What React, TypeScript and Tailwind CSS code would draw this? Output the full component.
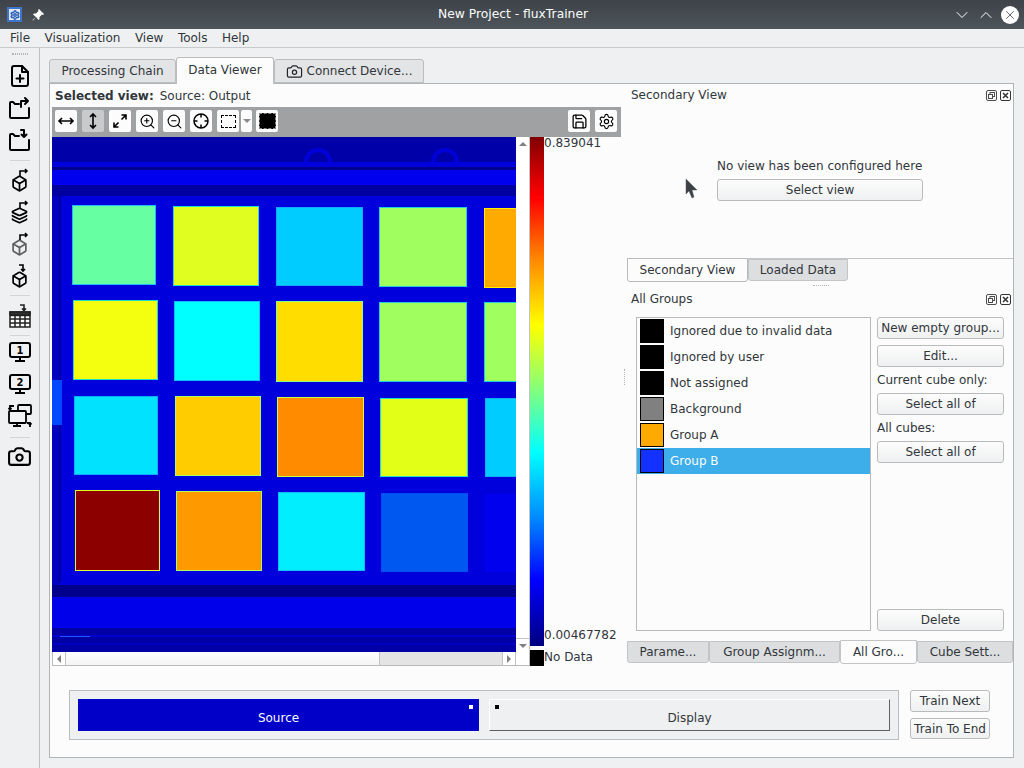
import { Box, Camera, ChevronDown, ChevronUp, Layers, Save, Settings, X, ZoomIn, ZoomOut } from "lucide-react";
import type { ReactNode } from "react";

const squares = [
  { x: 72, y: 205, w: 84, h: 80, fill: "#66ffa2", edge: "#22bbff" },
  { x: 173, y: 206, w: 86, h: 80, fill: "#e0ff20", edge: "#22ddcc" },
  { x: 276, y: 207, w: 87, h: 79, fill: "#00ccff", edge: "#11aaff" },
  { x: 379, y: 207, w: 88, h: 80, fill: "#a0ff5e", edge: "#22ccdd" },
  { x: 484, y: 208, w: 40, h: 80, fill: "#ffaa00", edge: "#ffee00" },
  { x: 73, y: 300, w: 85, h: 80, fill: "#f4ff10", edge: "#22ddcc" },
  { x: 174, y: 301, w: 86, h: 80, fill: "#00ffff", edge: "#11bbff" },
  { x: 276, y: 301, w: 87, h: 81, fill: "#ffdd00", edge: "#88ff88" },
  { x: 379, y: 302, w: 88, h: 80, fill: "#a0ff5e", edge: "#22ccdd" },
  { x: 484, y: 302, w: 40, h: 80, fill: "#a0ff5e", edge: "#22ccdd" },
  { x: 74, y: 396, w: 84, h: 79, fill: "#00e2ff", edge: "#11aaff" },
  { x: 175, y: 396, w: 86, h: 80, fill: "#ffcc00", edge: "#aaff66" },
  { x: 277, y: 397, w: 87, h: 80, fill: "#ff8c00", edge: "#ccff44" },
  { x: 380, y: 398, w: 88, h: 79, fill: "#e2ff18", edge: "#22ddcc" },
  { x: 485, y: 398, w: 40, h: 79, fill: "#00ccff", edge: "#11aaff" },
  { x: 75, y: 490, w: 85, h: 81, fill: "#8c0000", edge: "#ddff22" },
  { x: 176, y: 491, w: 86, h: 80, fill: "#ff9900", edge: "#aaff66" },
  { x: 278, y: 492, w: 87, h: 79, fill: "#00eeff", edge: "#11bbff" },
  { x: 381, y: 493, w: 87, h: 79, fill: "#0058f0", edge: "#0050f0" },
  { x: 485, y: 494, w: 40, h: 78, fill: "#0000ee", edge: "#0000ee" },
];

const groups = [
  { name: "Ignored due to invalid data", color: "bg-black" },
  { name: "Ignored by user", color: "bg-black" },
  { name: "Not assigned", color: "bg-black" },
  { name: "Background", color: "bg-[#808080]" },
  { name: "Group A", color: "bg-[#ffaa00]" },
  { name: "Group B", color: "bg-[#1432ff]", selected: true },
];

function Heatmap() {
  return (
    <svg width="464" height="515" viewBox="52 137 464 515" className="block">
      <rect x="52" y="137" width="464" height="515" fill="#0000dc" />
      <rect x="52" y="137" width="464" height="25" fill="#0000a8" />
      <rect x="52" y="162" width="464" height="5" fill="#0000dd" />
      <rect x="52" y="167" width="464" height="3" fill="#00008c" />
      <rect x="52" y="170" width="464" height="15" fill="#0000ee" />
      <rect x="52" y="185" width="464" height="11" fill="#0000a0" />
      <rect x="52" y="196" width="8" height="390" fill="#0000c0" />
      <path d="M60 196V582" stroke="#00009a" strokeWidth="2" />
      <rect x="52" y="380" width="10" height="45" fill="#0048ff" />
      <path d="M306 162a12 12 0 0 1 24 0" fill="none" stroke="#0000d8" strokeWidth="4" />
      <path d="M433 162a12 12 0 0 1 24 0" fill="none" stroke="#0000d8" strokeWidth="4" />
      {squares.map((s) => (
        <rect key={`${s.x}-${s.y}`} x={s.x + 0.5} y={s.y + 0.5} width={s.w - 1} height={s.h - 1} fill={s.fill} stroke={s.edge} strokeWidth="1" shapeRendering="crispEdges" />
      ))}
      <rect x="52" y="585" width="464" height="12" fill="#00008c" />
      <rect x="52" y="597" width="464" height="31" fill="#0000ea" />
      <rect x="52" y="628" width="464" height="24" fill="#0000a4" />
      <rect x="52" y="635" width="464" height="2" fill="#0000d0" />
      <rect x="52" y="643" width="464" height="2" fill="#0000c0" />
      <rect x="60" y="636" width="30" height="1" fill="#1a5cff" />
    </svg>
  );
}

function Arrow({ className }: { className: string }) {
  return <span className={`w-0 h-0 border-[4px] border-transparent ${className}`} />;
}

function PushButton({ children, className = "" }: { children: ReactNode; className?: string }) {
  return (
    <div className={`flex items-center justify-center border border-[#b9babb] rounded-[3px] bg-gradient-to-b from-[#fcfcfc] to-[#eff0f1] text-[12px] text-[#31363b] ${className}`}>
      {children}
    </div>
  );
}

function ToolButton({ children, pressed }: { children: ReactNode; pressed?: boolean }) {
  return (
    <div className={`w-[22px] h-[22px] rounded-[2px] flex items-center justify-center ${pressed ? "bg-[#c9cacb]" : "bg-[#fcfcfc]"}`}>
      {children}
    </div>
  );
}

function DockTitle({ title }: { title: string }) {
  return (
    <div className="flex items-center justify-between h-[14px] pl-[4px] pr-[2px] text-[12px] text-[#31363b]">
      <span>{title}</span>
      <div className="flex gap-[3px]">
        <svg width="11" height="11" viewBox="0 0 11 11" fill="none" stroke="#4d4d4d">
          <rect x="0.5" y="0.5" width="10" height="10" rx="1.5" />
          <rect x="4" y="2.5" width="4.5" height="4" />
          <rect x="2.5" y="4.5" width="4" height="4" fill="#fcfcfc" />
        </svg>
        <svg width="11" height="11" viewBox="0 0 11 11" fill="none" stroke="#333">
          <rect x="0.5" y="0.5" width="10" height="10" rx="1.5" />
          <path d="M3 3l5 5M8 3l-5 5" strokeWidth="1.5" />
        </svg>
      </div>
    </div>
  );
}

function Sep({ className }: { className: string }) {
  return <div className={`w-[20px] h-px bg-[#d3d4d5] ${className}`} />;
}

function Cell({ children, className = "" }: { children: ReactNode; className?: string }) {
  return <div className={`h-[32px] flex items-center justify-center ${className}`}>{children}</div>;
}

function FolderArrow({ down }: { down?: boolean }) {
  return (
    <svg width="24" height="24" viewBox="0 0 24 24" fill="none" stroke="#000" strokeWidth="2" strokeLinecap="round" strokeLinejoin="round">
      <path d="M11 8H7L5 6H3a1 1 0 0 0-1 1v14a1 1 0 0 0 1 1h17a1 1 0 0 0 1-1V12" />
      {down ? <path d="M13 2h3v7M13.5 6.500L16 9l2.500-2.500" /> : <path d="M13 11V5h7M17 2l3 3-3 3" />}
    </svg>
  );
}

function CubeOut({ kind }: { kind: "out" | "layers" | "faded" | "in" }) {
  return (
    <div className="relative w-[24px] h-[24px] flex items-end justify-center">
      {kind === "layers" ? (
        <Layers size={17} strokeWidth={2.4} color="#000" />
      ) : (
        <Box size={17} strokeWidth={2.4} color="#000" className={kind === "faded" ? "opacity-60" : ""} />
      )}
      <svg width="12" height="9" viewBox="0 0 12 9" fill="none" stroke="#000" strokeWidth="1.6" className="absolute top-0 right-[2px]">
        {kind === "in" ? <path d="M1 1h4v6M3 5l2 2 2-2" /> : <path d="M2 8V3h7M7 1l2 2-2 2" />}
      </svg>
    </div>
  );
}

function ScreenNum({ n }: { n: string }) {
  return (
    <svg width="24" height="24" viewBox="0 0 24 24" fill="none" stroke="#000" strokeWidth="2">
      <rect x="2" y="3" width="20" height="14" rx="2" />
      <path d="M12 17v4M7 21h10" />
      <text x="12" y="14" textAnchor="middle" fontSize="10" fontWeight="700" fill="#000" stroke="none" fontFamily="DejaVu Sans">{n}</text>
    </svg>
  );
}

function LeftToolbar() {
  return (
    <div className="w-[40px] shrink-0 border-r border-[#bfc0c1] flex flex-col items-center">
      <div className="w-[16px] h-[2px] mt-[5px] mb-[5px] border-t border-b border-dotted border-[#b4b5b6]" />
      <Cell>
        <svg width="24" height="24" viewBox="0 0 24 24" fill="none" stroke="#000" strokeWidth="2" strokeLinecap="round" strokeLinejoin="round">
          <path d="M14 2H6a2 2 0 0 0-2 2v16a2 2 0 0 0 2 2h12a2 2 0 0 0 2-2V8z" />
          <path d="M14 2v6h6M12 11v7M8.500 14.500h7" />
        </svg>
      </Cell>
      <Cell><FolderArrow /></Cell>
      <Cell><FolderArrow down /></Cell>
      <Sep className="mt-[4px]" />
      <Cell className="mt-[3px]"><CubeOut kind="out" /></Cell>
      <Cell><CubeOut kind="layers" /></Cell>
      <Cell><CubeOut kind="faded" /></Cell>
      <Cell><CubeOut kind="in" /></Cell>
      <Sep className="mt-[3px]" />
      <Cell className="mt-[4px]">
        <svg width="24" height="24" viewBox="0 0 24 24" fill="none" stroke="#222" strokeWidth="1.500">
          <path d="M12 1h4v5M14 4.500L16 6.500l2-2" strokeWidth="1.600" />
          <rect x="2" y="8" width="20" height="15" fill="#fff" />
          <path d="M2 11.500h20M2 15h20M2 19h20M7 11.500V23M12 11.500V23M17 11.500V23" />
          <rect x="2" y="8" width="20" height="3" fill="#333" />
        </svg>
      </Cell>
      <Sep className="mt-[3px]" />
      <Cell><ScreenNum n="1" /></Cell>
      <Cell><ScreenNum n="2" /></Cell>
      <Cell>
        <svg width="26" height="26" viewBox="0 0 26 26" fill="none" stroke="#000" strokeWidth="1.800">
          <rect x="11" y="2" width="13" height="9" rx="1" />
          <rect x="2" y="8" width="17" height="12" rx="1" fill="#f2f3f4" />
          <path d="M10 20v3M6 23h8M7 3H3v3M1.500 5l1.500 1.500L4.500 5M23 24v-4h-3M21.500 21.500L23 20l1.500 1.500" />
        </svg>
      </Cell>
      <Sep className="mt-[5px]" />
      <Cell className="mt-[2px]"><Camera size={25} strokeWidth={2} color="#000" /></Cell>
    </div>
  );
}

export default function App() {
  return (
    <div className="relative w-[1024px] h-[768px] overflow-hidden flex flex-col bg-[#eff0f1] font-['DejaVu_Sans',sans-serif] text-[#31363b]">
      {/* window title */}
      <div className="h-[29px] shrink-0 flex items-center justify-between pl-[7px] pr-[5px] bg-gradient-to-b from-[#3d4348] to-[#4e555b]">
        <div className="flex items-center w-[200px] gap-[10px]">
          <div className="w-[15px] h-[15px] bg-[#3f74c9] flex items-center justify-center">
            <div className="w-[11px] h-[11px] bg-[#dfe8f6] flex items-center justify-center">
              <Settings size={10} strokeWidth={3.500} color="#2f62b8" />
            </div>
          </div>
          <svg width="12" height="12" viewBox="0 0 12 12" fill="#fff">
            <path d="M7 0l5 5-1 1-1-.5L7.500 8 7.500 10 6.500 11 4 8 1 11.500.5 11 4 8 1 5.500 2 4.500H4L6.500 2 6 1z" />
          </svg>
        </div>
        <span className="text-[12.3px] text-[#fcfcfc]">New Project - fluxTrainer</span>
        <div className="flex items-center justify-end w-[200px] gap-[4px]">
          <ChevronDown size={20} strokeWidth={1.200} color="#fff" />
          <ChevronUp size={20} strokeWidth={1.200} color="#fff" />
          <div className="ml-[1px] w-[18px] h-[18px] rounded-full bg-white flex items-center justify-center">
            <X size={14} strokeWidth={1.500} color="#4d5359" />
          </div>
        </div>
      </div>

      {/* menu */}
      <div className="h-[19px] shrink-0 flex items-center gap-[14.5px] pl-[10px] border-b border-[#c9cacb] text-[12px]">
        <span>File</span>
        <span>Visualization</span>
        <span>View</span>
        <span>Tools</span>
        <span>Help</span>
      </div>

      <div className="flex flex-1 min-h-0">
        <LeftToolbar />
        <div className="pl-[9px] flex flex-col">
          {/* main tabs */}
          <div className="h-[35px] flex items-end text-[12px]">
            <div className="w-[127px] h-[24px] flex items-center justify-center bg-[#e3e4e5] border border-[#bcbdbe] rounded-t-[3px]">Processing Chain</div>
            <div className="w-[98px] h-[27px] mb-[-1px] z-10 flex items-center justify-center bg-[#fcfcfc] border border-b-0 border-[#bcbdbe] rounded-t-[3px] pb-[3px]">Data Viewer</div>
            <div className="w-[150px] h-[24px] flex items-center justify-center gap-[4px] bg-[#e3e4e5] border border-[#bcbdbe] rounded-t-[3px]">
              <Camera size={17} strokeWidth={1.700} color="#232629" />
              <span>Connect Device...</span>
            </div>
          </div>

          <div className="w-[965px] h-[675px] border border-[#b3b4b5] bg-[#fcfcfc] flex flex-col">
            <div className="h-[582px] flex">
              {/* data view */}
              <div className="w-[569px] ml-[2px] shrink-0 flex flex-col">
                <div className="h-[23px] pl-[3px] flex items-center gap-[6px] text-[12px]">
                  <b className="font-bold">Selected view:</b>
                  <span>Source: Output</span>
                </div>
                <div className="h-[30px] bg-[#a0a1a3] flex items-center justify-between pl-[3px] pr-[4px] pb-[2px]">
                  <div className="flex items-center gap-[5px]">
                    <ToolButton>
                      <svg width="18" height="18" viewBox="0 0 18 18" fill="none" stroke="#000" strokeWidth="1.600"><path d="M2 9h14M5 6L2 9l3 3M13 6l3 3-3 3" /></svg>
                    </ToolButton>
                    <ToolButton pressed>
                      <svg width="18" height="18" viewBox="0 0 18 18" fill="none" stroke="#000" strokeWidth="1.600"><path d="M9 2v14M6 5l3-3 3 3M6 13l3 3 3-3" /></svg>
                    </ToolButton>
                    <ToolButton>
                      <svg width="18" height="18" viewBox="0 0 18 18" fill="none" stroke="#000" strokeWidth="1.600"><path d="M3 15l4.500-4.500M3 10.500V15h4.500M15 3l-4.500 4.500M10.500 3H15v4.500" /></svg>
                    </ToolButton>
                    <ToolButton><ZoomIn size={17} strokeWidth={1.600} color="#000" /></ToolButton>
                    <ToolButton><ZoomOut size={17} strokeWidth={1.600} color="#000" /></ToolButton>
                    <ToolButton>
                      <svg width="18" height="18" viewBox="0 0 18 18" fill="none" stroke="#000" strokeWidth="1.500"><circle cx="9" cy="9" r="7" /><path d="M9 2v3.500M9 12.500V16M2 9h3.500M12.500 9H16" /></svg>
                    </ToolButton>
                    <div className="flex items-center gap-[2px]">
                      <ToolButton>
                        <div className="w-[15px] h-[13px] border border-dashed border-black" />
                      </ToolButton>
                      <div className="w-[11px] h-[22px] bg-[#fcfcfc] rounded-[2px] flex items-center justify-center pt-[4px]">
                        <Arrow className="border-t-[#8a8b8c]" />
                      </div>
                    </div>
                    <div className="ml-[-1px]">
                      <ToolButton>
                        <div className="w-[17px] h-[16px] bg-black border border-dashed border-[#888]" />
                      </ToolButton>
                    </div>
                  </div>
                  <div className="flex items-center gap-[5px]">
                    <ToolButton><Save size={17} strokeWidth={1.800} color="#000" /></ToolButton>
                    <ToolButton><Settings size={17} strokeWidth={1.600} color="#000" /></ToolButton>
                  </div>
                </div>
                <div className="flex">
                  <div className="w-[478px] shrink-0">
                    <div className="flex h-[515px]">
                      <Heatmap />
                      <div className="w-[14px] flex flex-col bg-white border-r border-[#c3c4c5]">
                        <div className="h-[14px] flex items-center justify-center pb-[4px]"><Arrow className="border-b-[#7f8081]" /></div>
                        <div className="flex-1" />
                        <div className="h-[14px] border-t border-[#c3c4c5] flex items-center justify-center pt-[4px]"><Arrow className="border-t-[#7f8081]" /></div>
                      </div>
                    </div>
                    <div className="h-[14px] flex border border-t-0 border-[#b9babb] bg-white">
                      <div className="w-[13px] border-r border-[#c3c4c5] flex items-center justify-center pr-[4px]"><Arrow className="border-r-[#7f8081]" /></div>
                      <div className="w-[314px] bg-gradient-to-b from-[#ffffff] to-[#f4f4f5] border-r border-[#c3c4c5]" />
                      <div className="w-[122px] bg-[#e4e4e5]" />
                      <div className="w-[13px] border-l border-[#c3c4c5] flex items-center justify-center pl-[4px]"><Arrow className="border-l-[#7f8081]" /></div>
                      <div className="flex-1 border-l border-[#c3c4c5]" />
                    </div>
                  </div>
                  <div className="flex-1 flex flex-col">
                    <div className="h-[509px] flex">
                      <div className="w-[14px] bg-[linear-gradient(to_bottom,#800000_0%,#ee0000_10%,#ff0000_12%,#ff8800_24%,#ffff00_37%,#80ff80_50%,#00ffff_62%,#0088ff_75%,#0000ff_87%,#000080_100%)]" />
                      <div className="flex-1 flex flex-col justify-between pb-[4px] text-[12px] leading-[13px]">
                        <span>0.839041</span>
                        <span>0.00467782</span>
                      </div>
                    </div>
                    <div className="mt-[4px] h-[16px] flex items-center text-[12px]">
                      <div className="w-[14px] h-[16px] bg-black" />
                      <span className="mt-[-2px]">No Data</span>
                    </div>
                  </div>
                </div>
              </div>

              {/* splitter */}
              <div className="w-[6px] shrink-0 pt-[285px] pl-[3px]">
                <div className="h-[16px] border-l border-dotted border-[#b4b5b6]" />
              </div>

              {/* right docks */}
              <div className="w-[386px] shrink-0 flex flex-col">
                <div className="h-[174px] pt-[4px]">
                  <DockTitle title="Secondary View" />
                  <div className="mt-[57px] pl-[90px] text-[12px] leading-[15px]">No view has been configured here</div>
                  <PushButton className="mt-[5px] ml-[90px] w-[206px] h-[22px]">Select view</PushButton>
                </div>
                <div className="h-[24px] border-t border-[#c3c4c5] flex items-start text-[12px]">
                  <div className="w-[121px] h-[24px] mt-[-1px] z-10 flex items-center justify-center bg-[#fcfcfc] border border-[#b9babb] rounded-b-[3px]">Secondary View</div>
                  <div className="w-[100px] h-[22px] flex items-center justify-center bg-[#dddee0] border border-[#c3c4c5] rounded-b-[3px]">Loaded Data</div>
                </div>
                <div className="h-[10px] flex justify-center pt-[3px] pl-[2px]">
                  <div className="w-[16px] h-[1px] border-t border-dotted border-[#b4b5b6]" />
                </div>
                <DockTitle title="All Groups" />
                <div className="mt-[11px] flex pl-[9px]">
                  <div className="w-[235px] h-[314px] border border-[#b9babb] bg-[#fcfcfc] text-[12px]">
                    {groups.map((g) => (
                      <div key={g.name} className={`h-[26px] flex items-center pl-[3px] ${g.selected ? "bg-[#3daee9] text-[#fcfcfc]" : ""}`}>
                        <div className={`w-[24px] h-[24px] border border-black ${g.color}`} />
                        <span className="ml-[6px]">{g.name}</span>
                      </div>
                    ))}
                  </div>
                  <div className="ml-[6px] w-[127px] h-[314px] flex flex-col text-[12px]">
                    <PushButton className="h-[22px] shrink-0">New empty group...</PushButton>
                    <PushButton className="h-[22px] shrink-0 mt-[6px]">Edit...</PushButton>
                    <div className="h-[26px] flex items-center">Current cube only:</div>
                    <PushButton className="h-[22px] shrink-0">Select all of</PushButton>
                    <div className="h-[26px] flex items-center">All cubes:</div>
                    <PushButton className="h-[22px] shrink-0">Select all of</PushButton>
                    <PushButton className="h-[22px] shrink-0 mt-auto">Delete</PushButton>
                  </div>
                </div>
                <div className="mt-[10px] flex items-start text-[12px]">
                  <div className="w-[82px] h-[22px] flex items-center justify-center bg-[#dddee0] border border-[#c3c4c5] rounded-b-[3px]">Parame...</div>
                  <div className="w-[131px] h-[22px] flex items-center justify-center bg-[#dddee0] border border-[#c3c4c5] rounded-b-[3px]">Group Assignm...</div>
                  <div className="w-[77px] h-[24px] mt-[-1px] z-10 flex items-center justify-center bg-[#fcfcfc] border border-[#c3c4c5] rounded-b-[3px]">All Gro...</div>
                  <div className="w-[96px] h-[22px] flex items-center justify-center bg-[#dddee0] border border-[#c3c4c5] rounded-b-[3px]">Cube Sett...</div>
                </div>
              </div>
            </div>

            {/* bottom strip */}
            <div className="mt-[24px] ml-[19px] flex items-start">
              <div className="w-[830px] h-[50px] bg-[#eff0f1] border border-[#bcbdbe] flex items-center gap-[10px] pl-[8px]">
                <div className="relative w-[401px] h-[32px] bg-[#0000c8] text-[#fcfcfc] text-[12px] flex items-center justify-center pt-[5px]">
                  Source
                  <span className="absolute top-[6px] right-[6px] w-[4px] h-[4px] bg-white" />
                </div>
                <div className="relative w-[401px] h-[32px] bg-[#eff0f1] border-t border-l border-t-white border-l-white border-r border-b border-r-[#5e6062] border-b-[#5e6062] text-[12px] flex items-center justify-center pt-[5px]">
                  Display
                  <span className="absolute top-[5px] left-[5px] w-[4px] h-[4px] bg-black" />
                </div>
              </div>
              <div className="ml-[11px] flex flex-col gap-[6px]">
                <PushButton className="w-[80px] h-[22px]">Train Next</PushButton>
                <PushButton className="w-[80px] h-[21px]">Train To End</PushButton>
              </div>
            </div>
          </div>
        </div>
      </div>

      {/* mouse pointer */}
      <svg width="13" height="20" viewBox="0 0 13 20" className="absolute left-[685px] top-[179px]">
        <path d="M1 0l11 11H7l2 7-2 1-3-7-3 3z" fill="#3c4146" stroke="#5a5f64" strokeWidth="0.500" />
      </svg>
    </div>
  );
}
